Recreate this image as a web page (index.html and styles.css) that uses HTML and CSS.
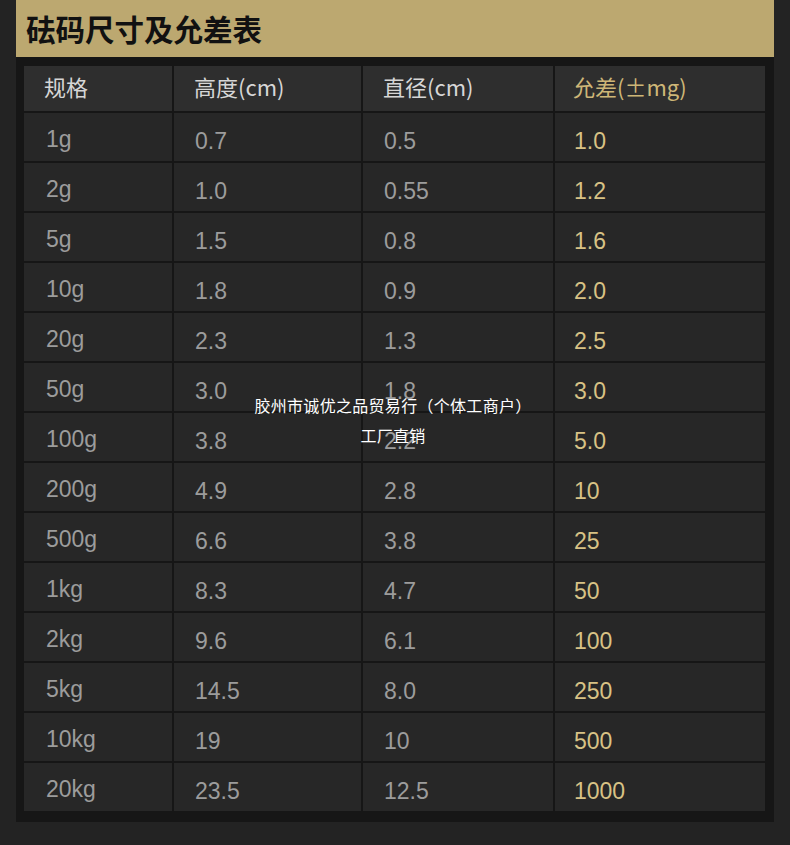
FILE: index.html
```html
<!DOCTYPE html>
<html lang="zh-CN">
<head>
<meta charset="utf-8">
<title>砝码尺寸及允差表</title>
<link rel="stylesheet" href="styles.css">
</head>
<body>
<div class="panel">
  <div class="title">砝码尺寸及允差表</div>
  <div class="table-wrap">
    <div class="grid">
      <div class="cell head">规格</div>
      <div class="cell head">高度(cm)</div>
      <div class="cell head">直径(cm)</div>
      <div class="cell head gold">允差(±mg)</div>

      <div class="cell spec">1g</div><div class="cell">0.7</div><div class="cell">0.5</div><div class="cell gold">1.0</div>
      <div class="cell spec">2g</div><div class="cell">1.0</div><div class="cell">0.55</div><div class="cell gold">1.2</div>
      <div class="cell spec">5g</div><div class="cell">1.5</div><div class="cell">0.8</div><div class="cell gold">1.6</div>
      <div class="cell spec">10g</div><div class="cell">1.8</div><div class="cell">0.9</div><div class="cell gold">2.0</div>
      <div class="cell spec">20g</div><div class="cell">2.3</div><div class="cell">1.3</div><div class="cell gold">2.5</div>
      <div class="cell spec">50g</div><div class="cell">3.0</div><div class="cell">1.8</div><div class="cell gold">3.0</div>
      <div class="cell spec">100g</div><div class="cell">3.8</div><div class="cell">2.2</div><div class="cell gold">5.0</div>
      <div class="cell spec">200g</div><div class="cell">4.9</div><div class="cell">2.8</div><div class="cell gold">10</div>
      <div class="cell spec">500g</div><div class="cell">6.6</div><div class="cell">3.8</div><div class="cell gold">25</div>
      <div class="cell spec">1kg</div><div class="cell">8.3</div><div class="cell">4.7</div><div class="cell gold">50</div>
      <div class="cell spec">2kg</div><div class="cell">9.6</div><div class="cell">6.1</div><div class="cell gold">100</div>
      <div class="cell spec">5kg</div><div class="cell">14.5</div><div class="cell">8.0</div><div class="cell gold">250</div>
      <div class="cell spec">10kg</div><div class="cell">19</div><div class="cell">10</div><div class="cell gold">500</div>
      <div class="cell spec">20kg</div><div class="cell">23.5</div><div class="cell">12.5</div><div class="cell gold">1000</div>
    </div>
  </div>
  <div class="watermark">
    <div>胶州市诚优之品贸易行（个体工商户）</div>
    <div>工厂直销</div>
  </div>
</div>
</body>
</html>
```
FILE: styles.css
```css
html, body {
  margin: 0;
  padding: 0;
  background: #232323;
}
body {
  width: 790px;
  height: 845px;
  overflow: hidden;
  font-family: "Liberation Sans", Arial, "Noto Sans CJK SC", sans-serif;
}
.panel {
  position: relative;
  margin-left: 16px;
  width: 758px;
  background: #161616;
  padding-bottom: 11px;
}
.title {
  height: 57px;
  background: #bca870;
  color: #111;
  font-family: "Noto Sans CJK SC", sans-serif;
  font-weight: 700;
  font-size: 29.5px;
  line-height: 57px;
  padding-left: 10px;
}
.table-wrap {
  padding: 9px 9px 0 8px;
}
.grid {
  display: grid;
  grid-template-columns: 148px 187px 190px 210px;
  grid-template-rows: 45px;
  grid-auto-rows: 48px;
  gap: 2px;
}
.cell {
  background: #272727;
  color: #9c9c9c;
  font-size: 23px;
  display: flex;
  align-items: center;
  padding-left: 21px;
  padding-top: 8px;
  box-sizing: border-box;
}
.cell.spec {
  padding-left: 22px;
  padding-top: 4px;
}
.cell.head {
  background: #2e2e2e;
  color: #d6d6d6;
  font-family: "Noto Sans CJK SC", sans-serif;
  font-size: 22px;
  padding-top: 0;
  padding-bottom: 5px;
  padding-left: 20px;
}
.cell.gold {
  color: #d8c285;
  padding-left: 19px;
}
.cell.head.gold {
  color: #cdb677;
  padding-left: 18px;
}
.watermark {
  position: absolute;
  left: 0;
  right: 0;
  top: 390px;
  text-align: center;
  color: #ffffff;
  font-family: "Noto Sans CJK SC", sans-serif;
  font-size: 16px;
  letter-spacing: 0.3px;
  line-height: 30px;
  padding-right: 4px;
}
```
